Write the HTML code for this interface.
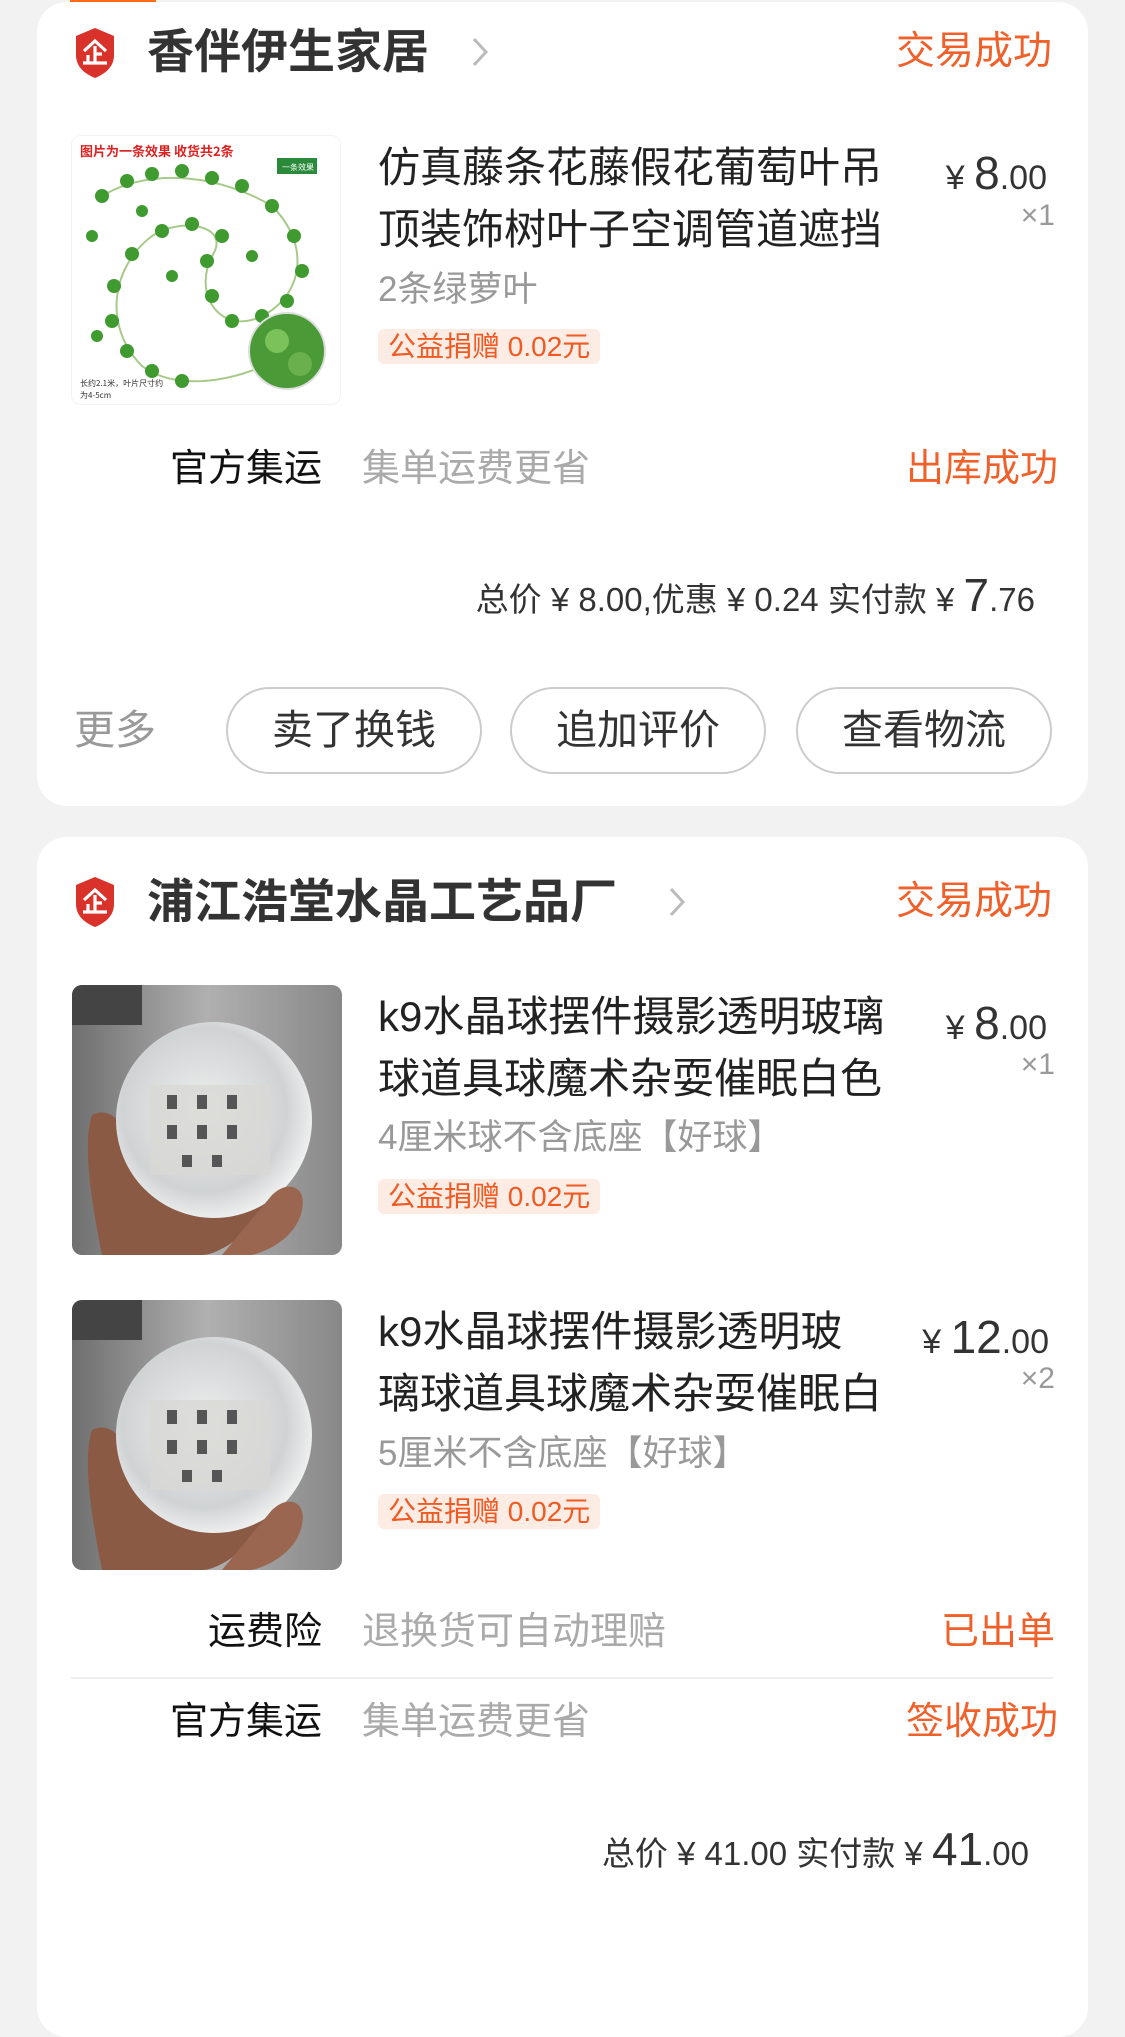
<!DOCTYPE html>
<html><head><meta charset="utf-8"><style>
*{margin:0;padding:0;box-sizing:border-box}
body{width:1125px;height:1923px;background:#f2f2f2;position:relative;overflow:hidden;font-family:"Liberation Sans","Noto Sans CJK SC",sans-serif}
.card{position:absolute;left:37px;width:1051px;background:#fff;border-radius:30px}
.a{position:absolute;white-space:nowrap}
.shop{font-size:47px;color:#333;font-weight:bold;line-height:60px}
.st{font-size:39px;color:#f0602a;line-height:50px;right:0}
.title{font-size:42px;color:#222;line-height:62px;left:378px}
.price{color:#333;font-size:34px;line-height:50px;text-align:right}
.price b{font-weight:normal;font-size:46px}
.qty{color:#999;font-size:30px;line-height:40px}
.sku{color:#999;font-size:35px;line-height:46px;left:378px}
.badge{left:378px;height:35px;line-height:35px;padding:0 10px;background:#fdece4;color:#f05a22;font-size:28px;border-radius:6px}
.lbl{font-size:38px;color:#111;line-height:50px;text-align:right;width:300px;left:22px}
.sub{font-size:38px;color:#aaa;line-height:50px;left:362px}
.rs{font-size:38px;color:#f0602a;line-height:50px}
.tot{font-size:33px;color:#333;line-height:50px}
.tot b{font-weight:normal;font-size:46px}
.btn{position:absolute;top:687px;width:256px;height:87px;border:2px solid #ccc;border-radius:44px;text-align:center;line-height:83px;font-size:41px;color:#333}
.img{position:absolute;width:270px;height:270px;border-radius:10px;overflow:hidden}
</style></head><body>
<div style="position:absolute;left:70px;top:0;width:86px;height:3px;background:#ff6a1a"></div>

<div class="card" style="top:2px;height:804px"></div>
<svg class="a" style="left:75px;top:27px" width="40" height="52" viewBox="0 0 40 52"><path d="M20 1 L39 9 L39 28 C39 40 30 47 20 51 C10 47 1 40 1 28 L1 9 Z" fill="#d8322a"/><path d="M9 24 L20 14 L31 24 M20 19 V36 M13 28 V36 M8 36 H32 M20 27 H27" stroke="#fff" stroke-width="3.2" fill="none"/></svg>
<div class="a shop" style="left:147px;top:22px">香伴伊生家居</div>
<svg class="a" style="left:470px;top:36px" width="20" height="32"><path d="M4 3 L16 16 L4 29" stroke="#bbb" stroke-width="3" fill="none"/></svg>
<div class="a st" style="right:73px;top:27px">交易成功</div>

<div class="img" style="left:71px;top:135px;background:#fff;border:1px solid #f2f2f2">
<svg width="270" height="270" viewBox="0 0 270 270">
<text x="8" y="20" font-size="13" fill="#d22" font-weight="bold" font-family="Noto Sans CJK SC">图片为一条效果 收货共2条</text>
<rect x="205" y="22" width="40" height="16" fill="#2a8a3a"/>
<text x="210" y="34" font-size="8" fill="#fff" font-family="Noto Sans CJK SC">一条效果</text>
<path d="M30 60 C80 30 150 40 200 70 C240 110 230 160 190 180 C150 200 120 160 140 120 C160 90 110 80 80 100 C40 130 30 190 70 230 C110 260 180 240 210 220" stroke="#a7c98a" stroke-width="2" fill="none"/>
<g fill="#3f9a2f">
<circle cx="30" cy="60" r="7"/><circle cx="55" cy="45" r="7"/><circle cx="80" cy="38" r="7"/><circle cx="110" cy="35" r="7"/><circle cx="140" cy="42" r="7"/><circle cx="170" cy="50" r="7"/><circle cx="200" cy="70" r="7"/><circle cx="222" cy="100" r="7"/><circle cx="230" cy="135" r="7"/><circle cx="215" cy="165" r="7"/><circle cx="190" cy="180" r="7"/><circle cx="160" cy="185" r="7"/><circle cx="140" cy="160" r="7"/><circle cx="135" cy="125" r="7"/><circle cx="150" cy="100" r="7"/><circle cx="120" cy="88" r="7"/><circle cx="90" cy="95" r="7"/><circle cx="60" cy="118" r="7"/><circle cx="42" cy="150" r="7"/><circle cx="40" cy="185" r="7"/><circle cx="55" cy="215" r="7"/><circle cx="80" cy="235" r="7"/><circle cx="110" cy="245" r="7"/><circle cx="20" cy="100" r="6"/><circle cx="100" cy="140" r="6"/><circle cx="70" cy="75" r="6"/><circle cx="180" cy="120" r="6"/><circle cx="25" cy="200" r="6"/>
</g>
<circle cx="215" cy="215" r="38" fill="#4a9a38" stroke="#ddd" stroke-width="2"/>
<circle cx="205" cy="205" r="12" fill="#7cc25a"/><circle cx="228" cy="228" r="12" fill="#6ab04c"/>
<text x="8" y="250" font-size="8" fill="#333" font-family="Noto Sans CJK SC">长约2.1米，叶片尺寸约</text>
<text x="8" y="262" font-size="8" fill="#333" font-family="Noto Sans CJK SC">为4-5cm</text>
</svg></div>
<div class="a title" style="top:137px">仿真藤条花藤假花葡萄叶吊<br>顶装饰树叶子空调管道遮挡</div>
<div class="a price" style="right:78px;top:148px">¥ <b>8</b>.00</div>
<div class="a qty" style="right:70px;top:196px">×1</div>
<div class="a sku" style="top:267px">2条绿萝叶</div>
<div class="a badge" style="top:329px">公益捐赠 0.02元</div>
<div class="a lbl" style="top:444px">官方集运</div>
<div class="a sub" style="top:444px">集单运费更省</div>
<div class="a rs" style="right:67px;top:444px">出库成功</div>
<div class="a tot" style="right:90px;top:570px">总价 ¥ 8.00,优惠 ¥ 0.24 实付款 ¥ <b>7</b>.76</div>
<div class="a" style="left:74px;top:705px;font-size:41px;color:#999;line-height:50px">更多</div>
<div class="btn" style="left:226px">卖了换钱</div>
<div class="btn" style="left:510px">追加评价</div>
<div class="btn" style="left:796px">查看物流</div>

<div class="card" style="top:837px;height:1200px"></div>
<svg class="a" style="left:75px;top:876px" width="40" height="52" viewBox="0 0 40 52"><path d="M20 1 L39 9 L39 28 C39 40 30 47 20 51 C10 47 1 40 1 28 L1 9 Z" fill="#d8322a"/><path d="M9 24 L20 14 L31 24 M20 19 V36 M13 28 V36 M8 36 H32 M20 27 H27" stroke="#fff" stroke-width="3.2" fill="none"/></svg>
<div class="a shop" style="left:147px;top:872px">浦江浩堂水晶工艺品厂</div>
<svg class="a" style="left:667px;top:886px" width="20" height="32"><path d="M4 3 L16 16 L4 29" stroke="#bbb" stroke-width="3" fill="none"/></svg>
<div class="a st" style="right:73px;top:877px">交易成功</div>

<div class="img" style="left:72px;top:985px">
<svg width="270" height="270" viewBox="0 0 270 270"><defs><radialGradient id="b" cx="0.45" cy="0.45" r="0.6"><stop offset="0" stop-color="#eeeeee"/><stop offset="0.7" stop-color="#d0d3d4"/><stop offset="1" stop-color="#f6f6f6"/></radialGradient><linearGradient id="bg"><stop offset="0" stop-color="#6f6f6f"/><stop offset="0.5" stop-color="#b0b0b0"/><stop offset="1" stop-color="#888"/></linearGradient></defs>
<rect width="270" height="270" fill="url(#bg)"/>
<rect x="0" y="0" width="70" height="40" fill="#444"/>
<path d="M20 130 C40 120 60 140 70 200 C100 230 150 200 190 150 C210 140 230 160 210 200 C190 240 150 270 130 270 L30 270 C20 220 10 160 20 130Z" fill="#8a5a44"/>
<circle cx="142" cy="135" r="98" fill="url(#b)"/>
<rect x="78" y="100" width="120" height="90" fill="#d8d8d4" opacity=".8"/>
<g fill="#555"><rect x="95" y="110" width="10" height="14"/><rect x="125" y="110" width="10" height="14"/><rect x="155" y="110" width="10" height="14"/><rect x="95" y="140" width="10" height="14"/><rect x="125" y="140" width="10" height="14"/><rect x="155" y="140" width="10" height="14"/><rect x="110" y="170" width="10" height="12"/><rect x="140" y="170" width="10" height="12"/></g>
<path d="M200 210 C215 195 235 200 230 225 C225 250 200 265 180 270 L150 270Z" fill="#9a6650"/>
</svg></div>
<div class="a title" style="top:986px">k9水晶球摆件摄影透明玻璃<br>球道具球魔术杂耍催眠白色</div>
<div class="a price" style="right:78px;top:998px">¥ <b>8</b>.00</div>
<div class="a qty" style="right:70px;top:1045px">×1</div>
<div class="a sku" style="top:1115px">4厘米球不含底座【好球】</div>
<div class="a badge" style="top:1179px">公益捐赠 0.02元</div>

<div class="img" style="left:72px;top:1300px">
<svg width="270" height="270" viewBox="0 0 270 270">
<rect width="270" height="270" fill="url(#bg)"/>
<rect x="0" y="0" width="70" height="40" fill="#444"/>
<path d="M20 130 C40 120 60 140 70 200 C100 230 150 200 190 150 C210 140 230 160 210 200 C190 240 150 270 130 270 L30 270 C20 220 10 160 20 130Z" fill="#8a5a44"/>
<circle cx="142" cy="135" r="98" fill="url(#b)"/>
<rect x="78" y="100" width="120" height="90" fill="#d8d8d4" opacity=".8"/>
<g fill="#555"><rect x="95" y="110" width="10" height="14"/><rect x="125" y="110" width="10" height="14"/><rect x="155" y="110" width="10" height="14"/><rect x="95" y="140" width="10" height="14"/><rect x="125" y="140" width="10" height="14"/><rect x="155" y="140" width="10" height="14"/><rect x="110" y="170" width="10" height="12"/><rect x="140" y="170" width="10" height="12"/></g>
<path d="M200 210 C215 195 235 200 230 225 C225 250 200 265 180 270 L150 270Z" fill="#9a6650"/>
</svg></div>
<div class="a title" style="top:1301px">k9水晶球摆件摄影透明玻<br>璃球道具球魔术杂耍催眠白</div>
<div class="a price" style="right:76px;top:1312px">¥ <b>12</b>.00</div>
<div class="a qty" style="right:70px;top:1359px">×2</div>
<div class="a sku" style="top:1431px">5厘米不含底座【好球】</div>
<div class="a badge" style="top:1494px">公益捐赠 0.02元</div>

<div class="a lbl" style="top:1607px">运费险</div>
<div class="a sub" style="top:1607px">退换货可自动理赔</div>
<div class="a rs" style="right:70px;top:1607px">已出单</div>
<div class="a" style="left:71px;top:1677px;width:982px;height:2px;background:#eee"></div>
<div class="a lbl" style="top:1697px">官方集运</div>
<div class="a sub" style="top:1697px">集单运费更省</div>
<div class="a rs" style="right:67px;top:1697px">签收成功</div>
<div class="a tot" style="right:96px;top:1824px">总价 ¥ 41.00 实付款 ¥ <b>41</b>.00</div>
</body></html>
